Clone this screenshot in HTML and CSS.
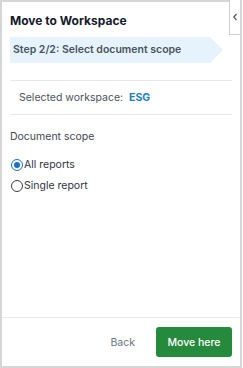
FILE: index.html
```html
<!DOCTYPE html>
<html>
<head>
<meta charset="utf-8">
<link rel="stylesheet" href="styles.css">
</head>
<body>
<div class="panel">
  <button class="collapse" aria-label="Collapse">
    <svg width="6" height="8" viewBox="0 0 6 8"><path d="M4.5 1 L1.8 4 L4.5 7" fill="none" stroke="#555" stroke-width="1.2"/></svg>
  </button>
  <div class="body">
    <h1 class="title">Move to Workspace</h1>
    <div class="step">Step 2/2: Select document scope</div>
    <div class="selected">Selected workspace: <span class="ws">ESG</span></div>
    <div class="scope-label">Document scope</div>
    <label class="radio"><input type="radio" name="scope" checked><span>All reports</span></label>
    <label class="radio"><input type="radio" name="scope"><span>Single report</span></label>
  </div>
  <div class="footer">
    <button class="back">Back</button>
    <button class="primary">Move here</button>
  </div>
</div>
</body>
</html>
```
FILE: styles.css
```css
* { box-sizing: border-box; }
html, body { margin: 0; padding: 0; background: #fff; }
body { font-family: Inter, "Noto Sans", sans-serif; }
.panel {
  position: relative;
  width: 242px;
  height: 368px;
  border: 2px solid #d6d6d6;
  display: flex;
  flex-direction: column;
}
.collapse {
  position: absolute;
  top: -2px;
  right: 0;
  width: 11px;
  height: 35px;
  padding: 0;
  background: #fff;
  border: none;
  border-left: 1.5px solid #d0d0d0;
  border-bottom: 1.5px solid #d0d0d0;
  display: flex;
  align-items: center;
  justify-content: center;
}
.body { flex: 1; padding: 11px 8px 0 8px; }
.title {
  margin: 0;
  font-size: 12px;
  line-height: 15px;
  font-weight: 700;
  color: #141a2b;
}
.step {
  margin-top: 9px;
  height: 26px;
  width: 213px;
  background: #e6f3fc;
  clip-path: polygon(0 0, 200px 0, 213px 50%, 200px 100%, 0 100%);
  font-size: 10.5px;
  font-weight: 600;
  color: #4a5361;
  line-height: 26px;
  padding-left: 3px;
}
.selected {
  margin-top: 17px;
  border-top: 1px solid #e5e7eb;
  border-bottom: 1px solid #e5e7eb;
  height: 35px;
  display: flex;
  align-items: center;
  padding-left: 9px;
  font-size: 10.5px;
  color: #4b5360;
  white-space: pre;
}
.ws { color: #1b7cc2; font-weight: 700; margin-left: 3px; }
.scope-label {
  margin-top: 15px;
  font-size: 10.5px;
  color: #3f4652;
  line-height: 14px;
}
.radio {
  display: flex;
  align-items: center;
  height: 21px;
  font-size: 10.5px;
  color: #2f3541;
  padding-left: 1px;
}
.radio:first-of-type { margin-top: 10px; }
.radio input {
  appearance: none;
  margin: 0 1px 0 0;
  width: 12px;
  height: 12px;
  border: 1.5px solid #3a3f47;
  border-radius: 50%;
  display: grid;
  place-items: center;
}
.radio input:checked { border-color: #1b6fd1; }
.radio input:checked::after {
  content: "";
  width: 6px;
  height: 6px;
  border-radius: 50%;
  background: #1b6fd1;
}
.footer {
  border-top: 1.5px solid #e8e9ee;
  height: 49px;
  display: flex;
  align-items: center;
  justify-content: flex-end;
  padding: 0 8px 0 0;
  gap: 21px;
}
.back {
  background: none;
  border: none;
  font-family: inherit;
  font-size: 10.5px;
  color: #6b7280;
  padding: 0;
}
.primary {
  font-family: inherit;
  background: #268a3c;
  color: #fff;
  border: none;
  border-radius: 3px;
  width: 76px;
  height: 30px;
  font-size: 10.5px;
  font-weight: 500;
}
```
